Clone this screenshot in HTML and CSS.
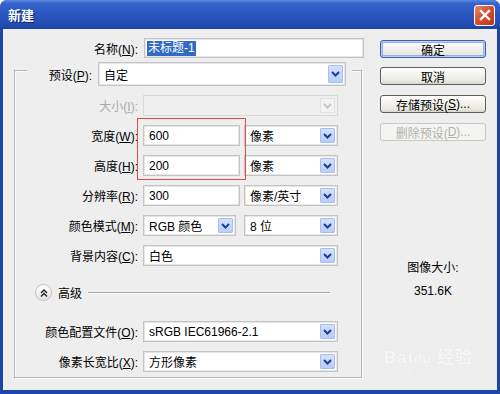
FILE: index.html
```html
<!DOCTYPE html>
<html>

<head>
    <title>新建</title>
    <link rel="stylesheet" href="styles.css">
</head>

<body>
    <div class="window">
        <div class="titlebar">
            <span class="title">新建</span>
            <span class="close-btn">
                <svg width="12" height="12" viewBox="0 0 12 12"><path d="M2 2 L10 10 M10 2 L2 10" stroke="#fff" stroke-width="2.4" stroke-linecap="square"/></svg>
            </span>
        </div>

        <div class="frame">
            <div class="main">
                <div class="row name-row">
                    <label class="lbl">名称(<u>N</u>):</label>
                    <div class="field name-field"><span class="selected">未标题-1</span></div>
                </div>

                <div class="group">
                    <div class="preset-row">
                        <label class="lbl preset-lbl">预设(<u>P</u>):</label>
                        <div class="field select preset-select">
                            <span class="val">自定</span>
                            <span class="drop"><svg width="9" height="6" viewBox="0 0 9 6"><path d="M1 1 L4.5 4.5 L8 1" fill="none" stroke="#1d3f93" stroke-width="2"/></svg></span>
                        </div>
                    </div>

                    <div class="row">
                        <label class="lbl disabled">大小(<u>I</u>):</label>
                        <div class="field select disabled-field w-full">
                            <span class="val"></span>
                            <span class="drop drop-off"><svg width="9" height="6" viewBox="0 0 9 6"><path d="M1 1 L4.5 4.5 L8 1" fill="none" stroke="#c4c4c4" stroke-width="2"/></svg></span>
                        </div>
                    </div>

                    <div class="row">
                        <label class="lbl">宽度(<u>W</u>):</label>
                        <div class="field w-num"><span class="val">600</span></div>
                        <div class="field select w-unit">
                            <span class="val">像素</span>
                            <span class="drop"><svg width="9" height="6" viewBox="0 0 9 6"><path d="M1 1 L4.5 4.5 L8 1" fill="none" stroke="#1d3f93" stroke-width="2"/></svg></span>
                        </div>
                    </div>

                    <div class="row">
                        <label class="lbl">高度(<u>H</u>):</label>
                        <div class="field w-num"><span class="val">200</span></div>
                        <div class="field select w-unit">
                            <span class="val">像素</span>
                            <span class="drop"><svg width="9" height="6" viewBox="0 0 9 6"><path d="M1 1 L4.5 4.5 L8 1" fill="none" stroke="#1d3f93" stroke-width="2"/></svg></span>
                        </div>
                    </div>

                    <div class="row">
                        <label class="lbl">分辨率(<u>R</u>):</label>
                        <div class="field w-num"><span class="val">300</span></div>
                        <div class="field select w-unit">
                            <span class="val">像素/英寸</span>
                            <span class="drop"><svg width="9" height="6" viewBox="0 0 9 6"><path d="M1 1 L4.5 4.5 L8 1" fill="none" stroke="#1d3f93" stroke-width="2"/></svg></span>
                        </div>
                    </div>

                    <div class="row">
                        <label class="lbl">颜色模式(<u>M</u>):</label>
                        <div class="field select w-mode">
                            <span class="val">RGB 颜色</span>
                            <span class="drop"><svg width="9" height="6" viewBox="0 0 9 6"><path d="M1 1 L4.5 4.5 L8 1" fill="none" stroke="#1d3f93" stroke-width="2"/></svg></span>
                        </div>
                        <div class="field select w-unit">
                            <span class="val">8 位</span>
                            <span class="drop"><svg width="9" height="6" viewBox="0 0 9 6"><path d="M1 1 L4.5 4.5 L8 1" fill="none" stroke="#1d3f93" stroke-width="2"/></svg></span>
                        </div>
                    </div>

                    <div class="row">
                        <label class="lbl">背景内容(<u>C</u>):</label>
                        <div class="field select w-full">
                            <span class="val">白色</span>
                            <span class="drop"><svg width="9" height="6" viewBox="0 0 9 6"><path d="M1 1 L4.5 4.5 L8 1" fill="none" stroke="#1d3f93" stroke-width="2"/></svg></span>
                        </div>
                    </div>

                    <div class="advanced">
                        <span class="adv-btn"><svg width="8" height="8" viewBox="0 0 8 8"><path d="M1 4 L4 1 L7 4 M1 7.5 L4 4.5 L7 7.5" fill="none" stroke="#222" stroke-width="1.4"/></svg></span>
                        <span class="adv-text">高级</span>
                        <span class="adv-line"></span>
                    </div>

                    <div class="row row-adv">
                        <label class="lbl">颜色配置文件(<u>O</u>):</label>
                        <div class="field select w-full">
                            <span class="val">sRGB IEC61966-2.1</span>
                            <span class="drop"><svg width="9" height="6" viewBox="0 0 9 6"><path d="M1 1 L4.5 4.5 L8 1" fill="none" stroke="#1d3f93" stroke-width="2"/></svg></span>
                        </div>
                    </div>

                    <div class="row">
                        <label class="lbl">像素长宽比(<u>X</u>):</label>
                        <div class="field select w-full">
                            <span class="val">方形像素</span>
                            <span class="drop"><svg width="9" height="6" viewBox="0 0 9 6"><path d="M1 1 L4.5 4.5 L8 1" fill="none" stroke="#1d3f93" stroke-width="2"/></svg></span>
                        </div>
                    </div>
                </div>
            </div>

            <div class="side">
                <div class="btn btn-default">确定</div>
                <div class="btn">取消</div>
                <div class="btn">存储预设(<u>S</u>)...</div>
                <div class="btn btn-off">删除预设(<u>D</u>)...</div>

                <div class="size-title">图像大小:</div>
                <div class="size-value">351.6K</div>
            </div>
        </div>

        <!-- annotation drawn on top of the screenshot -->
        <div class="mark"></div>

        <div class="watermark">
            <div class="wm-logo">Bai<span class="wm-du">du</span> 经验</div>
            <div class="wm-url">jingyan.baidu.com</div>
        </div>
    </div>
</body>

</html>
```

FILE: styles.css
```css
body {
    margin: 0;
    font-family: Tahoma, "Liberation Sans", "Noto Sans CJK SC", sans-serif;
    font-size: 12px;
    color: #000;
}

.window {
    position: relative;
    width: 500px;
    height: 394px;
    display: flex;
    flex-direction: column;
    background: #1e45a8;
    border-radius: 7px 7px 0 0;
    overflow: hidden;
}

.titlebar {
    height: 29px;
    flex-shrink: 0;
    display: flex;
    align-items: center;
    padding: 0 5px 0 8px;
    background: linear-gradient(#5b86e0 0%, #3564cc 12%, #2a56c0 45%, #2550b8 75%, #1d43a3 100%);
}

.title {
    color: #fff;
    font-weight: bold;
    font-size: 13px;
    text-shadow: 1px 1px 0 #0c2a78;
}

.close-btn {
    margin-left: auto;
    width: 19px;
    height: 19px;
    display: flex;
    align-items: center;
    justify-content: center;
    border: 1px solid #fff;
    border-radius: 3px;
    background: linear-gradient(135deg, #e88a6e 0%, #d6522f 45%, #b8341a 100%);
    margin-top: 1px;
}

.frame {
    flex: 1;
    margin: 0 3px 4px 3px;
    background: #eeeeee;
    display: flex;
    padding-top: 9px;
}

.main {
    width: 361px;
}

.row {
    display: flex;
    align-items: center;
    height: 21px;
    margin-top: 9px;
}

.lbl {
    padding-right: 5px;
    text-align: right;
    flex-shrink: 0;
    box-sizing: border-box;
    width: 128px;
    white-space: nowrap;
}

.lbl.disabled {
    color: #acacac;
}

.name-row {
    margin-top: 0;
    height: 20px;
}

.name-row .lbl {
    width: 141px;
    padding-right: 6px;
}

.field {
    box-sizing: border-box;
    height: 100%;
    background: #fff;
    border: 1px solid #c4c4c4;
    box-shadow: inset 0 0 0 1px #e6e6e6;
    display: flex;
    align-items: center;
    padding: 2px 2px 2px 5px;
    white-space: nowrap;
}

.name-field {
    width: 220px;
    padding-left: 2px;
}

.selected {
    background: #316ac5;
    color: #fff;
    padding: 0 1px;
    line-height: 15px;
}

.select .val {
    flex: 1;
}

.drop {
    align-self: stretch;
    width: 15px;
    box-sizing: border-box;
    border: 1px solid #a7bff0;
    border-radius: 1px;
    background: linear-gradient(#d3e1fd, #b8cdf9);
    display: flex;
    align-items: center;
    justify-content: center;
}

.drop-off {
    border-color: #e2e2e2;
    background: #f3f3f3;
}

.disabled-field {
    background: #f0f0f0;
    border-color: #d8d8d8;
    box-shadow: none;
}

.w-full {
    width: 195px;
}

.w-num {
    width: 97px;
}

.w-unit {
    width: 94px;
    margin-left: 4px;
}

.w-mode {
    width: 93px;
    margin-right: 4px;
}

.group {
    box-sizing: border-box;
    margin: 12px 0 0 11px;
    width: 348px;
    height: 308px;
    border: 1px solid #b4b4b4;
    box-shadow: 1px 1px 0 #fafafa, inset 1px 1px 0 #fafafa;
}

.preset-row {
    display: flex;
    align-items: center;
    height: 24px;
    width: 325px;
    margin: -9px 0 0 12px;
    background: #eeeeee;
    box-sizing: border-box;
    padding-right: 6px;
}

.preset-lbl {
    width: 71px;
    padding-right: 6px;
}

.preset-select {
    width: 248px;
}

.advanced {
    display: flex;
    align-items: center;
    height: 17px;
    margin-top: 18px;
    padding: 0 31px 0 20px;
}

.adv-btn {
    width: 15px;
    height: 15px;
    border-radius: 50%;
    border: 1px solid #c2c2c2;
    background: linear-gradient(#ffffff, #e4e4e4);
    display: flex;
    align-items: center;
    justify-content: center;
}

.adv-text {
    margin: 0 6px 0 6px;
}

.adv-line {
    flex: 1;
    height: 1px;
    background: #a8a8a8;
    box-shadow: 0 1px 0 #fafafa;
}

.row-adv {
    margin-top: 20px;
}

.side {
    width: 106px;
    margin-left: 16px;
    padding-top: 2px;
    display: flex;
    flex-direction: column;
    align-items: center;
}

.btn {
    box-sizing: border-box;
    width: 106px;
    height: 18px;
    margin-bottom: 10px;
    border: 1px solid #5e5e5e;
    border-radius: 3px;
    background: linear-gradient(#ffffff 0%, #f3f2ee 45%, #e8e6de 85%, #d8d4c8 100%);
    display: flex;
    align-items: center;
    justify-content: center;
    white-space: nowrap;
}

.btn-default {
    border-color: #3c5fa8;
    box-shadow: inset 0 0 0 1px #b9cdf5, inset 0 0 0 2px #8fb0ec;
    margin-bottom: 9px;
}

.btn-off {
    color: #b2b1ab;
    border-color: #c9c9c5;
    background: #f4f4f2;
}

.size-title {
    margin-top: 107px;
}

.size-value {
    margin-top: 9px;
}

.mark {
    position: absolute;
    left: 137px;
    top: 118px;
    width: 107px;
    height: 60px;
    border: 1px solid #e8474a;
}

.watermark {
    position: absolute;
    left: 384px;
    top: 343px;
    color: #f7f7f7;
    text-shadow: 0 0 1px #dddddd;
    font-family: "Liberation Sans", "Noto Sans CJK SC", sans-serif;
}

.wm-logo {
    font-size: 17px;
    font-weight: bold;
    letter-spacing: 1px;
}

.wm-du {
    font-size: 13px;
}

.wm-url {
    font-size: 9px;
    margin-top: -1px;
}
```
